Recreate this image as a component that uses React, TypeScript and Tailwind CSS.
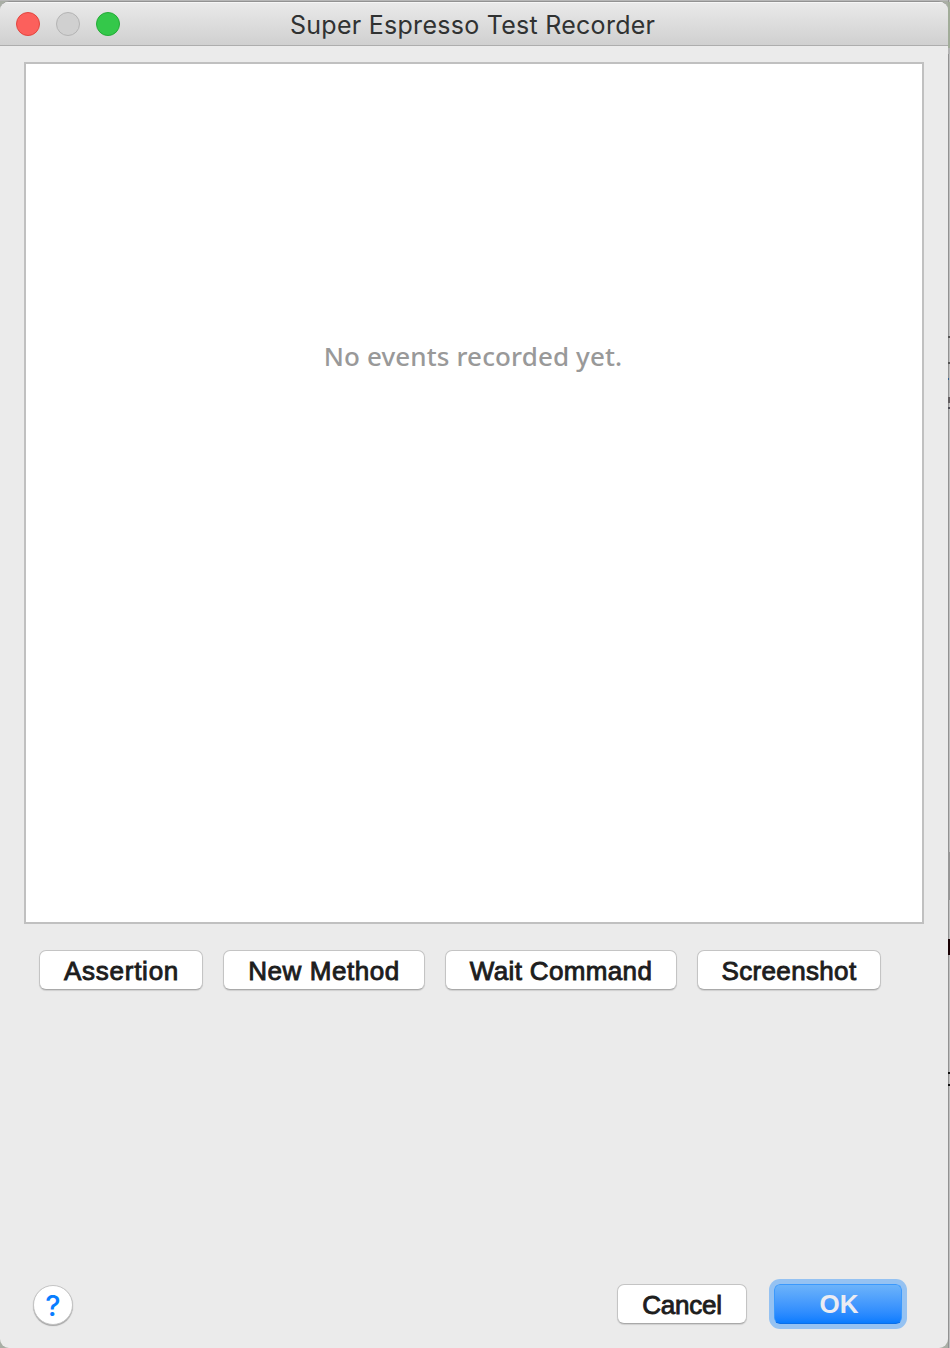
import React from "react";

const buttonBase =
  "box-border flex h-[40px] items-center justify-center rounded-[7px] border border-[#c4c4c4] border-b-[#a9a9a9] bg-white pt-px font-['Liberation_Sans',sans-serif] text-[26px] leading-none text-[#1d1d1d] shadow-[0_1px_1px_rgba(0,0,0,0.12)] whitespace-nowrap [-webkit-text-stroke:0.9px_#1d1d1d]";

function PushButton({ label, className }: { label: string; className: string }) {
  return (
    <button className={`${buttonBase} ${className}`}>
      <span>{label}</span>
    </button>
  );
}

function TitleBar() {
  return (
    <header className="flex h-[44px] shrink-0 items-center border-b border-[#adadad] bg-linear-to-b from-[#eaeaea] to-[#d0d0d0] pl-4 shadow-[inset_0_1px_0_#f6f6f6]">
      <div className="flex w-[104px] gap-4">
        <span className="size-6 rounded-full border border-[#e2463f] bg-[#fc605c]" />
        <span className="size-6 rounded-full border border-[#b4b4b4] bg-[#d0d0d0]" />
        <span className="size-6 rounded-full border border-[#24ab37] bg-[#34c84a]" />
      </div>
      <h1 className="ml-[170px] whitespace-nowrap pt-[4px] font-['Inter',sans-serif] text-[25px] leading-none tracking-[0.27px] text-[#303232]">
        Super Espresso Test Recorder
      </h1>
    </header>
  );
}

/** Sliver of the desktop that shows to the right of the window. */
function DesktopEdge() {
  return (
    <svg className="h-[1348px] w-[2px] shrink-0" viewBox="0 0 2 1348" shapeRendering="crispEdges">
      <rect width="2" height="1348" fill="#c0c0c0" />
      <rect width="1" height="1348" fill="#929292" />
      <rect y="2" width="2" height="46" fill="#a1ac99" />
      <rect y="48" width="2" height="6" fill="#b5b5b5" />
      <rect y="336" width="2" height="2" fill="#555" />
      <rect y="362" width="2" height="2" fill="#555" />
      <rect y="378" width="1" height="2" fill="#346090" />
      <rect y="397" width="2" height="6" fill="#625e60" />
      <rect y="407" width="2" height="2" fill="#505058" />
      <rect y="852" width="2" height="48" fill="#979797" />
      <rect y="939" width="2" height="16" fill="#180003" />
      <rect y="1072" width="2" height="2" fill="#111" />
      <rect y="1084" width="2" height="2" fill="#111" />
    </svg>
  );
}

export default function App() {
  return (
    <div className="flex h-[1348px] w-[950px] overflow-hidden bg-[#a9aea5]">
      <div className="flex w-[948px] flex-col">
        <div className="h-px shrink-0 bg-[#b7b7b7]" />
        <div className="flex flex-1 flex-col overflow-hidden rounded-[9px] border-t border-[#929292] bg-[#ebebeb]">
          <TitleBar />
          <main className="flex flex-1 flex-col">
            <section className="ml-6 mt-4 flex h-[862px] w-[900px] shrink-0 justify-center border-2 border-[#c0c0c0] bg-white pt-[274px]">
              <p className="mr-[2px] whitespace-nowrap font-['Noto_Sans',sans-serif] text-[26px] font-medium leading-9 tracking-[0.12px] text-[#999]">
                No events recorded yet.
              </p>
            </section>
            <div className="ml-[39px] mt-[26px] flex gap-5">
              <PushButton label="Assertion" className="w-[164px] pl-px tracking-[0.75px]" />
              <PushButton label="New Method" className="w-[202px] tracking-[0.55px]" />
              <PushButton label="Wait Command" className="w-[232px] tracking-[0.35px]" />
              <PushButton label="Screenshot" className="w-[184px] tracking-[0.35px]" />
            </div>
            <footer className="mt-auto flex h-[64px] items-start pl-[33px]">
              <button className="mt-px flex size-10 items-center justify-center rounded-full border border-[#c4c4c4] bg-white font-['Inter',sans-serif] text-[29px] font-medium leading-none text-[#087dff] shadow-[0_1px_1px_rgba(0,0,0,0.3)]">
                ?
              </button>
              <PushButton label="Cancel" className="ml-[544px] w-[130px] tracking-[-0.2px]" />
              <button className="ml-[27px] flex h-[40px] w-[128px] items-center justify-center rounded-[6px] border border-[#3b99fc] border-b-[#0a6fe8] bg-linear-to-b from-[#6cb3fa] to-[#067cff] pl-[2px] font-['Liberation_Sans',sans-serif] text-[26px] font-bold leading-none text-[#ececf2] shadow-[0_0_0_5px_#95c2f2]">
                OK
              </button>
            </footer>
          </main>
        </div>
      </div>
      <DesktopEdge />
    </div>
  );
}
